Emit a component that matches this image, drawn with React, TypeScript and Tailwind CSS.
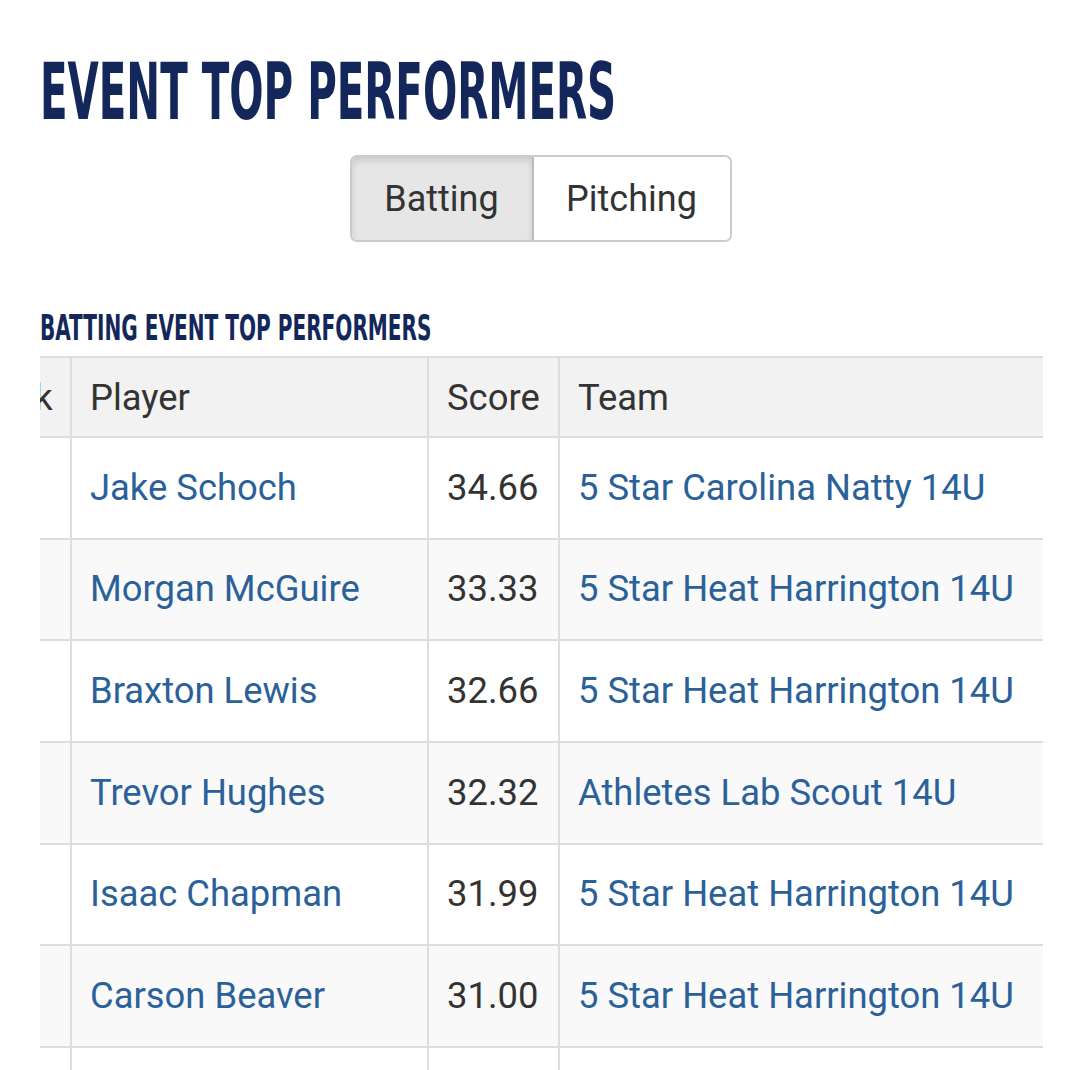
import React from "react";

const rows = [
  { player: "Jake Schoch", score: "34.66", team: "5 Star Carolina Natty 14U" },
  { player: "Morgan McGuire", score: "33.33", team: "5 Star Heat Harrington 14U" },
  { player: "Braxton Lewis", score: "32.66", team: "5 Star Heat Harrington 14U" },
  { player: "Trevor Hughes", score: "32.32", team: "Athletes Lab Scout 14U" },
  { player: "Isaac Chapman", score: "31.99", team: "5 Star Heat Harrington 14U" },
  { player: "Carson Beaver", score: "31.00", team: "5 Star Heat Harrington 14U" },
  { player: "Ryan Parker", score: "30.66", team: "5 Star Heat Harrington 14U" },
];

const App = () => {
  return (
    <div className="w-[1080px] h-[1070px] overflow-hidden bg-white font-['Roboto',sans-serif] text-[#333]">
      <div className="pl-10 pt-[52px]">
        <h1 className="h-[80px] origin-left scale-x-[0.575] whitespace-nowrap font-['DejaVu_Sans_Condensed','DejaVu_Sans',sans-serif] text-[78px] font-bold leading-[80px] text-[#14275a]">
          EVENT TOP PERFORMERS
        </h1>
      </div>

      <div className="mt-[23px] flex justify-center pl-[1px]">
        <div className="flex h-[87px] rounded-[7px] border-2 border-[#ccc] text-[36px]">
          <button className="w-[182px] rounded-l-[5px] border-r-2 border-[#bbb] bg-[#e6e6e6] shadow-[inset_0_4px_6px_rgba(0,0,0,0.12)]">
            Batting
          </button>
          <button className="w-[196px] rounded-r-[5px] bg-white">Pitching</button>
        </div>
      </div>

      <div className="pl-10 pt-[66px]">
        <h2 className="h-[40px] origin-left scale-x-[0.62] whitespace-nowrap font-['DejaVu_Sans_Condensed','DejaVu_Sans',sans-serif] text-[36px] font-bold leading-[40px] text-[#14275a]">
          BATTING EVENT TOP PERFORMERS
        </h2>
      </div>

      <div className="ml-10 mt-[8px] w-[1003px] overflow-hidden">
        <table className="-ml-[88px] w-[1140px] table-fixed border-collapse text-[36.4px]">
          <colgroup>
            <col className="w-[118px]" />
            <col className="w-[357px]" />
            <col className="w-[131px]" />
            <col />
          </colgroup>
          <thead>
            <tr className="h-[80px] bg-[#f2f2f2]">
              <th className="border-2 border-[#ddd] px-[18px] pt-[2px] text-left font-normal">Rank</th>
              <th className="border-2 border-[#ddd] px-[18px] pt-[2px] text-left font-normal">Player</th>
              <th className="border-2 border-[#ddd] px-[18px] pt-[2px] text-left font-normal">Score</th>
              <th className="border-2 border-[#ddd] px-[18px] pt-[2px] text-left font-normal">Team</th>
            </tr>
          </thead>
          <tbody>
            {rows.map((r, i) => (
              <tr key={i} className={i % 2 === 1 ? "h-[101.7px] bg-[#f9f9f9]" : "h-[101.7px] bg-white"}>
                <td className="border-2 border-[#ddd] px-[18px]">{i + 1}</td>
                <td className="border-2 border-[#ddd] px-[18px] text-[#2b6199]">{r.player}</td>
                <td className="border-2 border-[#ddd] px-[18px]">{r.score}</td>
                <td className="whitespace-nowrap border-2 border-[#ddd] px-[18px] text-[#2b6199]">{r.team}</td>
              </tr>
            ))}
          </tbody>
        </table>
      </div>
    </div>
  );
};

export default App;
